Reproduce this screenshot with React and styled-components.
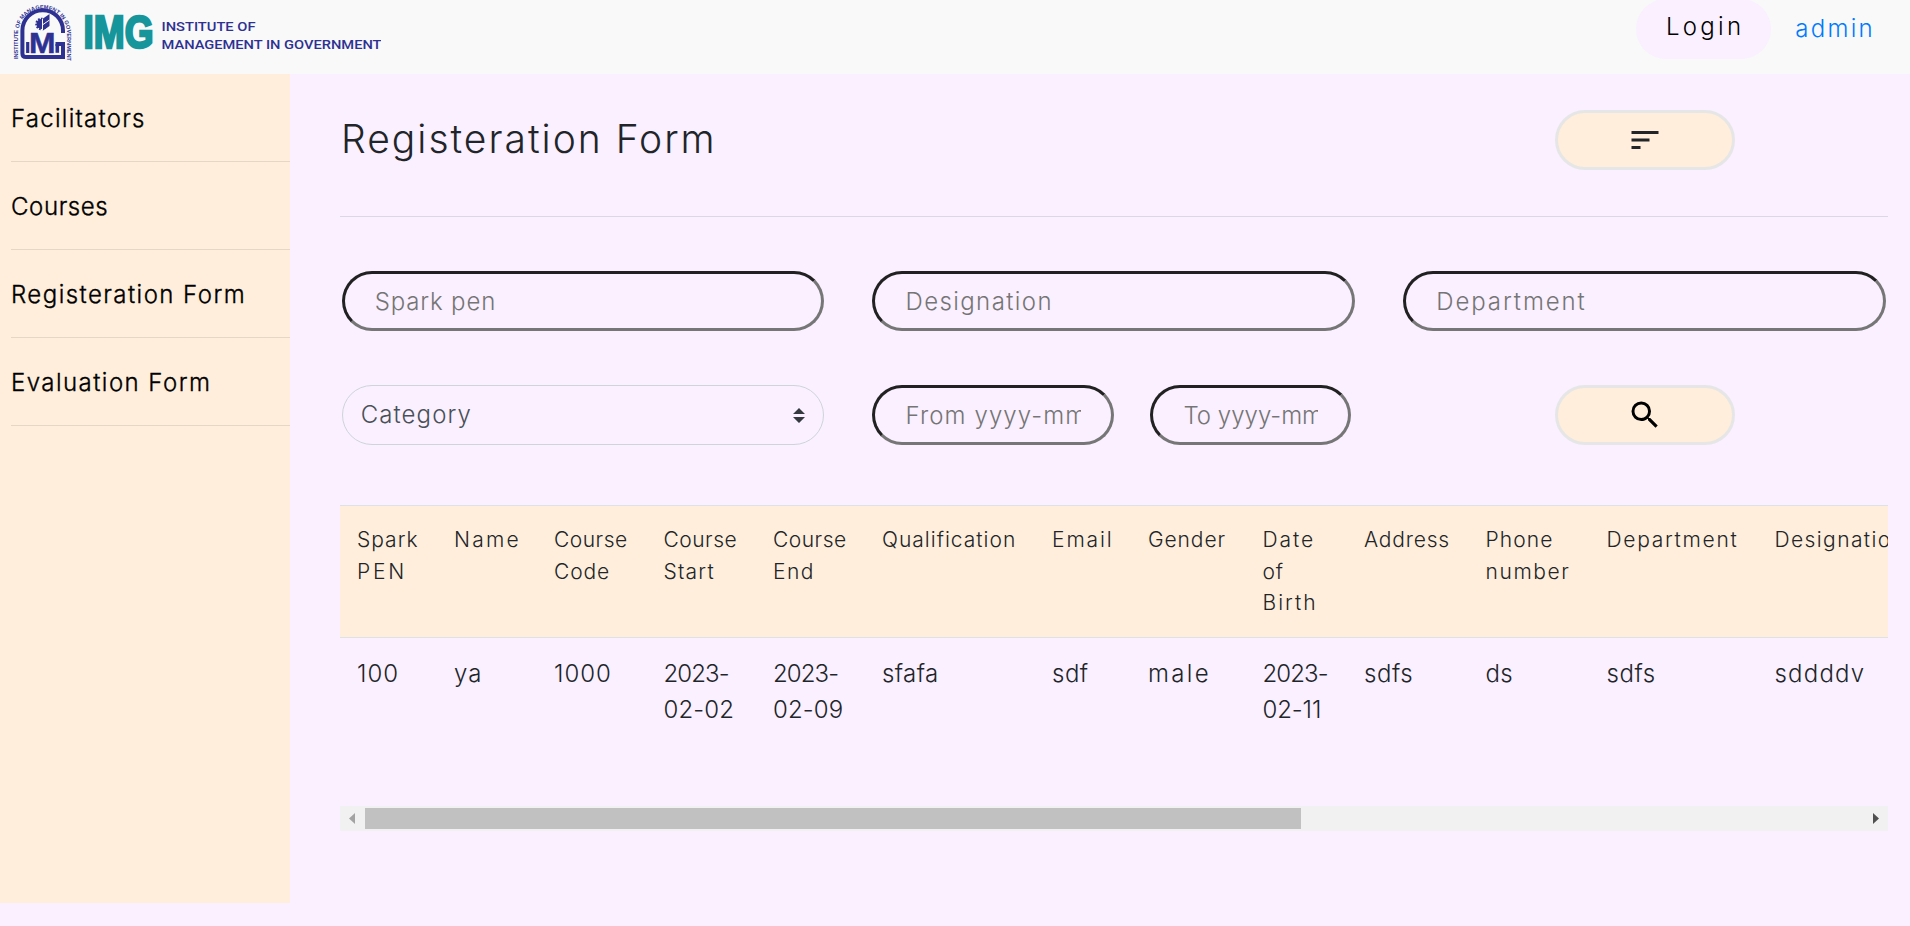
import React from "react";
import styled, { createGlobalStyle } from "styled-components";
import { MdSort, MdSearch } from "react-icons/md";

const GlobalStyle = createGlobalStyle`
  *, *::before, *::after { box-sizing: border-box; }
  html, body { margin: 0; padding: 0; background: #faf0ff; }
  body {
    overflow: hidden;
    font-family: Inter, "Open Sans", sans-serif;
    font-weight: 300;
    font-size: 24px;
    line-height: 36px;
    color: #212529;
  }
`;

const Header = styled.header`
  display: flex;
  align-items: flex-start;
  justify-content: space-between;
  height: 74px;
  padding-right: 35px;
  background: #f9f9f9;
`;

const Logo = styled.svg`
  display: block;
  width: 381px;
  height: 62px;
`;

const HeaderNav = styled.nav`
  display: flex;
  align-items: flex-start;
`;

const LoginButton = styled.button`
  width: 135px;
  height: 60px;
  margin: -1px 24px 0 0;
  padding: 0 0 5px 3px;
  border: 0;
  border-radius: 30px;
  background: #faf0ff;
  color: #000;
  font: inherit;
  font-weight: 300;
  letter-spacing: 3.3px;
`;

const UserLink = styled.a`
  margin-top: 11px;
  color: #007bff;
  letter-spacing: 2.3px;
  text-decoration: none;
`;

const Body = styled.div`
  display: flex;
  align-items: flex-start;
`;

const Sidebar = styled.aside`
  flex: none;
  width: 290px;
  height: 829px;
  padding-left: 11px;
  background: #ffeedb;
`;

const SideLink = styled.a`
  display: flex;
  align-items: center;
  height: 88px;
  padding-top: 3px;
  border-bottom: 1px solid #e6d6c5;
  color: #000;
  letter-spacing: ${(p) => p.$track}px;
  -webkit-text-stroke: 0.35px #000;
`;

const Main = styled.main`
  width: 1598px;
  padding: 36px 0 0 50px;
`;

const TitleBar = styled.div`
  display: flex;
  align-items: flex-start;
  justify-content: space-between;
  height: 107px;
  padding-right: 153px;
  border-bottom: 1px solid #ddd6e4;
`;

const Title = styled.h1`
  margin: 0 0 0 1px;
  font-size: 39px;
  font-weight: 300;
  line-height: 58px;
  letter-spacing: 2px;
`;

const PillButton = styled.button`
  display: flex;
  align-items: center;
  justify-content: center;
  width: 180px;
  height: 60px;
  padding: 0;
  border: 3px solid #e6e6e6;
  border-radius: 30px;
  background: #ffeedb;
  color: ${(p) => p.$ink};
`;

const Filters = styled.form`
  display: grid;
  grid-template-columns: repeat(3, 482.5px);
  column-gap: 48.3px;
  row-gap: 54px;
  padding: 54px 1.7px 0;
`;

const Field = styled.input`
  width: ${(p) => p.$width || "100%"};
  height: 60px;
  padding: 0 30px;
  border: 3px solid;
  border-color: #212121 #767676 #767676 #212121;
  border-radius: 30px;
  background: transparent;
  font: inherit;
  letter-spacing: ${(p) => p.$track}px;
  &::placeholder { color: #757575; opacity: 1; }
`;

const SelectBox = styled.div`
  display: flex;
  align-items: center;
  justify-content: space-between;
  height: 60px;
  padding: 0 18px;
  border: 1px solid #ced4da;
  border-radius: 30px;
  color: #495057;
  letter-spacing: 1.1px;
`;

const Caret = styled.svg`
  width: 12px;
  height: 15px;
`;

const DateRange = styled.div`
  display: flex;
  gap: 36px;
`;

const ButtonCell = styled.div`
  display: flex;
  padding-left: 152px;
`;

const TableFrame = styled.section`
  margin-top: 60px;
`;

const TableViewport = styled.div`
  height: 301px;
  overflow: hidden;
`;

const Table = styled.table`
  width: 1627px;
  table-layout: fixed;
  border-collapse: separate;
  border-spacing: 0;
`;

const Col = styled.col`
  width: ${(p) => p.$width}px;
`;

const HeadCell = styled.th`
  height: 133px;
  padding: 18px 0 0 17px;
  border-top: 1px solid #dee2e6;
  border-bottom: 1px solid #dee2e6;
  background: #ffeedb;
  font-size: 21px;
  font-weight: 300;
  line-height: 31.5px;
  text-align: left;
  vertical-align: top;
`;

const Cell = styled.td`
  padding: 18px 0 0 17px;
  vertical-align: top;
`;

const Line = styled.div`
  white-space: nowrap;
  letter-spacing: ${(p) => p.$track}px;
`;

const ScrollTrack = styled.div`
  display: flex;
  align-items: center;
  height: 25px;
  background: #f1f1f1;
`;

const ScrollThumb = styled.div`
  width: 936px;
  height: 21px;
  margin-right: auto;
  background: #c1c1c1;
`;

const ScrollArrow = styled.svg`
  flex: none;
  width: 25px;
  height: 25px;
  fill: ${(p) => p.$fill};
`;

const menu = [
  ["Facilitators", 1.25],
  ["Courses", 0.6],
  ["Registeration Form", 1.45],
  ["Evaluation Form", 1.45],
];

/* Each column: width, header lines and value lines, every line with its tracking. */
const columns = [
  [97, [["Spark", 1], ["PEN", 2.8]], [["100", 1]]],
  [100, [["Name", 2.2]], [["ya", 1.1]]],
  [109.5, [["Course", 0.5], ["Code", 0.9]], [["1000", 1]]],
  [109.5, [["Course", 0.5], ["Start", 1.2]], [["2023-", -0.9], ["02-02", 0.1]]],
  [109, [["Course", 0.5], ["End", 1.4]], [["2023-", -0.9], ["02-09", 0.1]]],
  [170, [["Qualification", 1]], [["sfafa", 0.4]]],
  [96, [["Email", 1.9]], [["sdf", 0.5]]],
  [114.5, [["Gender", 0.9]], [["male", 2.3]]],
  [101.5, [["Date", 1.9], ["of", 0.8], ["Birth", 2]], [["2023-", -0.9], ["02-11", -0.1]]],
  [121.5, [["Address", 0.8]], [["sdfs", 0.6]]],
  [121, [["Phone", 1.1], ["number", 1.6]], [["ds", 0.3]]],
  [168, [["Department", 1.7]], [["sdfs", 0.6]]],
  [209.5, [["Designation", 1.4]], [["sddddv", 1.2]]],
];

const Lines = ({ lines }) =>
  lines.map(([text, track]) => (
    <Line key={text} $track={track}>{text}</Line>
  ));

function BrandLogo() {
  return (
    <Logo viewBox="0 0 381 62" aria-label="Institute of Management in Government">
      <defs>
        <path id="arch" d="M18.4 59V31A24.3 24.3 0 0 1 66.8 31V62" />
      </defs>
      <text fontFamily="Liberation Sans, sans-serif" fontSize="5.6" fontWeight="700" fill="#2e3192">
        <textPath href="#arch">INSTITUTE OF MANAGEMENT IN GOVERNMENT</textPath>
      </text>
      <g fill="none" stroke="#2e3192" strokeWidth="4">
        <path d="M63 33V30.5A20.3 20.3 0 0 0 22.4 30.5V53.5Q22.4 57 26 57H63V44H55.5" />
        <path d="M57.3 44V52.8" strokeWidth="3.6" />
        <path d="M27.7 42V53" strokeWidth="3.2" />
      </g>
      <text x="29" y="53" textLength="26.5" lengthAdjust="spacingAndGlyphs"
        fontFamily="Liberation Sans, sans-serif" fontSize="29" fontWeight="700"
        fill="#2e3192" stroke="#2e3192" strokeWidth="0.5">M</text>
      <circle cx="41.5" cy="24" r="5" fill="#2e3192" stroke="#2e3192" strokeWidth="2.6" strokeDasharray="1.6 1.2" />
      <path d="M43 18.5L49.5 14V26L43 30.5Z" fill="#2e3192" />
      <path d="M42.5 30V19M43 24.5L49.5 20" stroke="#f9f9f9" strokeWidth="1" />
      <text x="83.5" y="48.3" textLength="70" lengthAdjust="spacingAndGlyphs"
        fontFamily="Liberation Sans, sans-serif" fontSize="46.5" fontWeight="700"
        fill="#16959b" stroke="#16959b" strokeWidth="2.6">IMG</text>
      <g fontFamily="Roboto, sans-serif" fontSize="13.2" fontWeight="500" fill="#2e3192">
        <text x="161.5" y="31" textLength="94" lengthAdjust="spacingAndGlyphs">INSTITUTE OF</text>
        <text x="161.5" y="48.8" textLength="220" lengthAdjust="spacingAndGlyphs">MANAGEMENT IN GOVERNMENT</text>
      </g>
    </Logo>
  );
}

export default function App() {
  return (
    <>
      <GlobalStyle />
      <Header>
        <BrandLogo />
        <HeaderNav>
          <LoginButton>Login</LoginButton>
          <UserLink>admin</UserLink>
        </HeaderNav>
      </Header>
      <Body>
        <Sidebar>
          {menu.map(([label, track]) => (
            <SideLink key={label} $track={track}>{label}</SideLink>
          ))}
        </Sidebar>
        <Main>
          <TitleBar>
            <Title>Registeration Form</Title>
            <PillButton $ink="#212529"><MdSort size={36} /></PillButton>
          </TitleBar>
          <Filters>
            <Field placeholder="Spark pen" $track={0.85} />
            <Field placeholder="Designation" $track={1.4} />
            <Field placeholder="Department" $track={1.9} />
            <SelectBox>
              Category
              <Caret viewBox="0 0 12 15" fill="#343a40">
                <path d="M0 6L6 0L12 6ZM0 9H12L6 15Z" />
              </Caret>
            </SelectBox>
            <DateRange>
              <Field placeholder="From yyyy-mm-dd" $width="242px" $track={1.1} />
              <Field placeholder="To yyyy-mm-dd" $width="201px" $track={0} />
            </DateRange>
            <ButtonCell>
              <PillButton type="button" $ink="#000"><MdSearch size={36} /></PillButton>
            </ButtonCell>
          </Filters>
          <TableFrame>
            <TableViewport>
              <Table>
                <colgroup>
                  {columns.map(([width], i) => <Col key={i} $width={width} />)}
                </colgroup>
                <thead>
                  <tr>
                    {columns.map(([, head], i) => (
                      <HeadCell key={i}><Lines lines={head} /></HeadCell>
                    ))}
                  </tr>
                </thead>
                <tbody>
                  <tr>
                    {columns.map(([, , value], i) => (
                      <Cell key={i}><Lines lines={value} /></Cell>
                    ))}
                  </tr>
                </tbody>
              </Table>
            </TableViewport>
            <ScrollTrack>
              <ScrollArrow viewBox="0 0 25 25" $fill="#a3a3a3"><path d="M15 7V18L9 12.5Z" /></ScrollArrow>
              <ScrollThumb />
              <ScrollArrow viewBox="0 0 25 25" $fill="#505050"><path d="M10 7V18L16 12.5Z" /></ScrollArrow>
            </ScrollTrack>
          </TableFrame>
        </Main>
      </Body>
    </>
  );
}
